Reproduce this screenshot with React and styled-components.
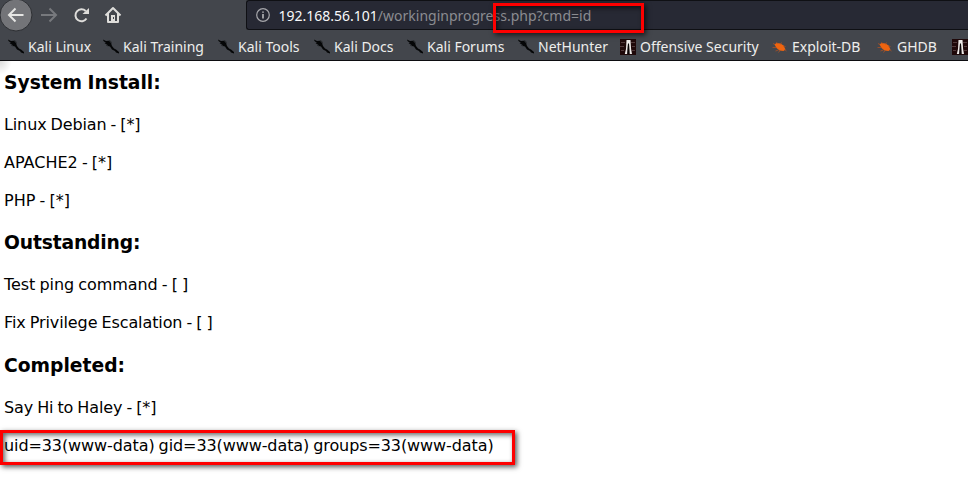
import React from "react";
import styled, { createGlobalStyle } from "styled-components";

const GlobalStyle = createGlobalStyle`
  * { box-sizing: border-box; }
  html, body { margin: 0; height: 100%; overflow: hidden; background: #fff; }
`;

const Window = styled.div`
  position: relative;
  width: 968px;
  height: 477px;
  overflow: hidden;
  background: #fff;
`;

const Chrome = styled.header`
  height: 61px;
  background: #43464c;
  border-bottom: 1px solid #0c0c10;
  font-family: "Noto Sans", sans-serif;
  font-size: 14px;
`;

const Toolbar = styled.div`
  display: flex;
  height: 30px;
`;

const NavButtons = styled.nav`
  display: flex;
  flex: none;
  width: 246px;
`;

const NavIcon = styled.svg`
  display: block;
  flex: none;
`;

const AddressBar = styled.div`
  display: flex;
  flex: 1;
  height: 30px;
  padding-left: 8px;
  background: #272934;
  border: 1px solid #0f1014;
  border-right: 0;
  border-radius: 3px 0 0 3px;
`;

const Url = styled.div`
  margin-left: 7.5px;
  line-height: 29px;
  color: #8b8c91;
  white-space: nowrap;
`;

const Host = styled.span`
  color: #f9f9fa;
`;

const InfoIcon = styled.svg`
  flex: none;
  margin-top: 6px;
`;

const Bookmarks = styled.div`
  display: flex;
  height: 30px;
`;

const Bookmark = styled.div`
  display: flex;
  flex: none;
  width: ${(p) => p.$width}px;
  padding-left: 8px;
  gap: 4px;
  color: #eeeeec;
  line-height: 33px;
  white-space: nowrap;
`;

const Favicon = styled.svg`
  flex: none;
  margin-top: 9px;
`;

const Page = styled.main`
  padding: 8.5px 4px 0;
  color: #000;
  font-family: "DejaVu Sans", sans-serif;
  font-size: 16px;
  line-height: 22px;
  word-spacing: -0.93px;
`;

const Heading = styled.h3`
  margin: 0 0 18.72px;
  font-size: 18.72px;
  line-height: 25.3px;
  letter-spacing: ${(p) => p.$spacing}px;
`;

const Line = styled.p`
  margin: 0 0 16px;
  letter-spacing: ${(p) => p.$spacing}px;
`;

const Section = styled.section`
  margin-bottom: 18.72px;
`;

const Highlight = styled.div`
  position: absolute;
  left: ${(p) => p.$x}px;
  top: ${(p) => p.$y}px;
  width: ${(p) => p.$w}px;
  height: ${(p) => p.$h}px;
  border: 3px solid #fe0000;
  box-shadow: 2px 2px 5px rgba(0, 0, 0, 0.65), inset 2px 2px 5px rgba(0, 0, 0, 0.6);
`;

const PageEdge = styled.div`
  position: absolute;
  left: 0;
  top: 61px;
  width: 12px;
  height: 14px;
  background: radial-gradient(ellipse at 0 0, rgba(0, 0, 0, 0.14), transparent 70%);
`;

function Dragon() {
  return (
    <Favicon width="16" height="16" viewBox="0 0 16 16">
      <path d="M0 .5 3 2l3-.3L8 4l1 3 2 2.5 2 1 3 2.5v1.5l-3-1-1-1.5-3-1.5-2-3-2-.5-1-1.5L1.5 4.5 3 4 .5 2z" fill="#050607" />
      <path d="m6 1.5 2 1 .5 2M3 6l2 1" fill="none" stroke="#1d1f23" strokeWidth=".7" />
    </Favicon>
  );
}

function Tower() {
  return (
    <Favicon width="16" height="16" viewBox="0 0 16 16">
      <path fill="#1f0809" d="M0 0h16v16H0z" />
      <path d="M1 3.5h4M11 3.5h4M0 7.5h4M12 7.5h3M1 11.5h3M12 11.5h3" stroke="#523a3b" />
      <path d="M6.5 1h4l.6 9 .9 5h-2.5L9 5H8L7.300 15H4.800L6 10z" fill="#eeeae8" />
      <path d="M8 4.500h1L9.500 15H7.300z" fill="#090506" />
    </Favicon>
  );
}

function Bug() {
  return (
    <Favicon width="16" height="16" viewBox="0 0 16 16">
      <path d="m2.500 5.500 2-1.500 4 .5 3 2 2 4-2 1.500-4-.5-3-2.500z" fill="#ee640f" />
      <path d="m5.500 5-1-2M8.500 5.500l1-2M3 5.500 1 4.500M4.500 8.500H.5M6.500 11 3.500 12M11 7l2.500.5M12.500 10.500l2 1.500M8 11.500l-1.500 2" stroke="#b9521f" strokeWidth=".7" fill="none" />
    </Favicon>
  );
}

const icons = { dragon: Dragon, tower: Tower, bug: Bug };

const bookmarks = [
  ["dragon", "Kali Linux", 95],
  ["dragon", "Kali Training", 115],
  ["dragon", "Kali Tools", 96],
  ["dragon", "Kali Docs", 93],
  ["dragon", "Kali Forums", 111],
  ["dragon", "NetHunter", 102],
  ["tower", "Offensive Security", 152],
  ["bug", "Exploit-DB", 105],
  ["bug", "GHDB", 75],
  ["tower", "", 28],
];

const sections = [
  ["System Install:", 0, [["Linux Debian - [*]", -0.12], ["APACHE2 - [*]", 0], ["PHP - [*]", 0]]],
  ["Outstanding:", -0.15, [["Test ping command - [ ]", -0.05], ["Fix Privilege Escalation - [ ]", -0.1]]],
  ["Completed:", 0, [["Say Hi to Haley - [*]", -0.11], ["uid=33(www-data) gid=33(www-data) groups=33(www-data)", -0.095]]],
];

export default function App() {
  return (
    <Window>
      <GlobalStyle />
      <Chrome>
        <Toolbar>
          <NavButtons>
            <NavIcon width="130" height="32" viewBox="0 0 130 32" fill="none">
              <circle cx="16" cy="15" r="16" fill="#737478" stroke="#2d2f33" />
              <path d="M23.5 15H9m6.500-6.500L9 15l6.500 6.500" stroke="#e5e5e3" strokeWidth="2" />
              <path d="M41 15h15m-6.500-6.500L56 15l-6.500 6.500" stroke="#77797d" strokeWidth="2" />
              <path d="M86.5 18.5a6 6 0 1 1-.8-7.5" stroke="#deddda" strokeWidth="2" />
              <path d="M89 8v6h-6.5z" fill="#deddda" />
              <path d="m105.5 15.5 7.5-7.5 7.5 7.5M108 13.5V22h10v-8.5" stroke="#deddda" strokeWidth="2" strokeLinejoin="round" />
              <path d="M111 15h4v6h-4z" fill="#deddda" />
              <path d="M113 17h1v2h-1z" fill="#43464c" />
            </NavIcon>
          </NavButtons>
          <AddressBar>
            <InfoIcon width="16" height="16" viewBox="0 0 16 16" fill="none">
              <circle cx="8" cy="8" r="6.3" stroke="#a7a7ab" strokeWidth="1.2" />
              <path d="M8 7v4.5M8 4.5v1.3" stroke="#b8b8bb" strokeWidth="1.6" />
            </InfoIcon>
            <Url><Host>192.168.56.101</Host>/workinginprogress.php?cmd=id</Url>
          </AddressBar>
        </Toolbar>
        <Bookmarks>
          {bookmarks.map(([kind, label, width], i) => {
            const Icon = icons[kind];
            return <Bookmark key={i} $width={width}><Icon />{label}</Bookmark>;
          })}
        </Bookmarks>
      </Chrome>
      <Page>
        {sections.map(([title, spacing, lines]) => (
          <Section key={title}>
            <Heading $spacing={spacing}>{title}</Heading>
            {lines.map(([line, tracking]) => <Line key={line} $spacing={tracking}>{line}</Line>)}
          </Section>
        ))}
      </Page>
      <PageEdge />
      <Highlight $x={493} $y={3} $w={151} $h={30} />
      <Highlight $x={0} $y={430} $w={515} $h={35} />
    </Window>
  );
}
